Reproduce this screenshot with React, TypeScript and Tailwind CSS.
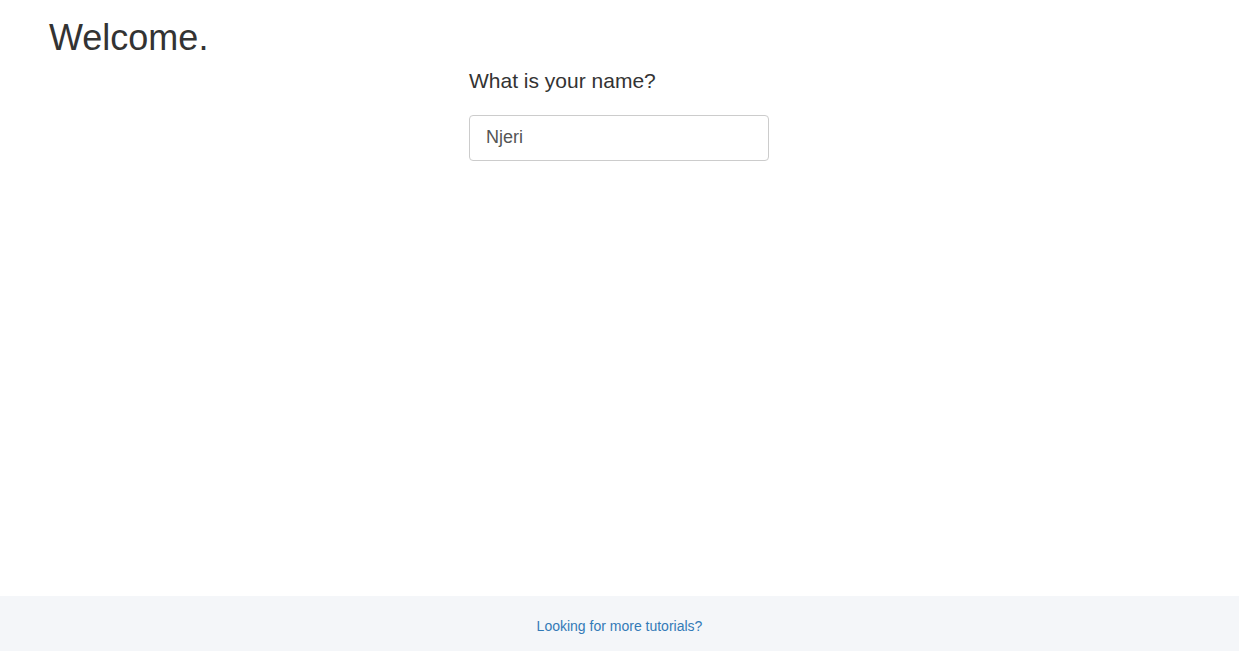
export default function App() {
  return (
    <div
      className="flex min-h-screen flex-col bg-white text-[#333]"
      style={{ fontFamily: '"Liberation Sans", Arial, sans-serif' }}
    >
      <main className="flex-1">
        <h1 className="pl-[49px] pt-[18px] text-[36px] leading-[1.1]">Welcome.</h1>
        <div className="flex justify-center pr-[1px]">
          <div className="w-[300px]">
            <label htmlFor="name" className="mt-[11px] block text-[21px] leading-[1.1]">
              What is your name?
            </label>
            <input
              id="name"
              type="text"
              defaultValue="Njeri"
              className="mt-[23px] block h-[46px] w-full rounded-[4px] border border-[#ccc] bg-white px-[16px] text-[18px] text-[#555] outline-none"
            />
          </div>
        </div>
      </main>
      <footer className="flex h-[55px] items-center justify-center bg-[#f4f6f9] pt-[6px]">
        <a href="#" className="text-[14px] text-[#337ab7]">
          Looking for more tutorials?
        </a>
      </footer>
    </div>
  );
}
